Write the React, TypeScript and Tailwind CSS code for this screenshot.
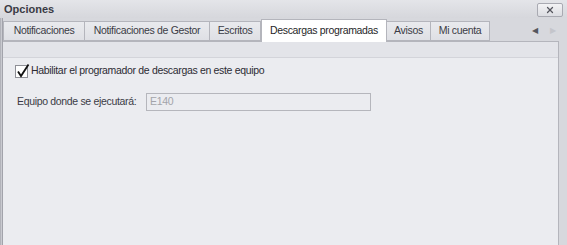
import { X } from 'lucide-react';

const tabs = [
  { label: 'Notificaciones', w: 'w-[82px]' },
  { label: 'Notificaciones de Gestor', w: 'w-[125px]' },
  { label: 'Escritos', w: 'w-[51px]' },
  { label: 'Descargas programadas', w: 'w-[126px]', active: true },
  { label: 'Avisos', w: 'w-[44px]' },
  { label: 'Mi cuenta', w: 'w-[59px]' },
];

export default function App() {
  return (
    <div className="w-[567px] h-[245px] overflow-hidden flex flex-col bg-[#d7d8dd] text-[10.5px] tracking-[-0.33px] text-[#2b2b33] font-['Liberation_Sans',Arial,sans-serif]">
      {/* Title bar */}
      <div className="h-[18px] flex items-center justify-between pl-[4px] pr-[4px] bg-gradient-to-b from-[#e4e5e9] to-[#d6d7dc]">
        <span className="font-bold text-[11px] tracking-normal text-[#3a3b45]">Opciones</span>
        <button className="mt-[1px] w-[26px] h-[14px] flex items-center justify-center rounded-[2px] border border-[#a9aab2] bg-gradient-to-b from-[#f3f3f5] to-[#dcdde2]">
          <X size={10} strokeWidth={3} className="text-[#55565e]" />
        </button>
      </div>

      <div className="flex flex-1">
        {/* left frame */}
        <div className="w-[3px] flex">
          <div className="w-[1px] bg-[#b2b3ba]" />
          <div className="w-[1px] bg-[#c9cad0]" />
          <div className="w-[1px] bg-[#a2a3ab]" />
        </div>

        <div className="flex-1 flex flex-col">
          {/* Tab strip */}
          <div className="h-[23px] flex items-end relative">
            {tabs.map((t) =>
              t.active ? (
                <div
                  key={t.label}
                  className={`${t.w} h-[23px] -mb-[1px] z-10 flex items-center justify-center bg-white border border-b-0 border-[#b4b5bc] text-[#1f1f28]`}
                >
                  {t.label}
                </div>
              ) : (
                <div
                  key={t.label}
                  className={`${t.w} h-[20px] flex items-center justify-center bg-gradient-to-b from-[#e9eaee] to-[#dfe0e5] border border-l-0 first:border-l border-[#b4b5bc] text-[#3a3b45]`}
                >
                  {t.label}
                </div>
              )
            )}
            <div className="flex-1 h-[20px] flex items-center justify-end gap-[13px] pr-[11px]">
              <span className="text-[8px] text-[#55565e]">◀</span>
              <span className="text-[8px] text-[#c4c5cb]">▶</span>
            </div>
          </div>

          {/* Panel */}
          <div className="flex-1 flex flex-col bg-[#ebecf0] border-t border-r border-[#b4b5bc] mr-[8px]">
            <div className="h-[16px] bg-[#e3e4e9] border-b border-[#d3d4da]" />
            <div className="flex flex-col pl-[12px] pt-[6px]">
              <label className="flex items-center gap-[3px] h-[14px]">
                <span className="relative w-[13px] h-[13px] border border-[#8e8f96] bg-white">
                  <svg width="14" height="15" viewBox="0 0 14 15" className="absolute left-[0px] -top-[3px]">
                    <path d="M2 8.5 L5 13 L12.5 1.5" fill="none" stroke="#111" strokeWidth="1.8" />
                  </svg>
                </span>
                <span className="text-[#2b2b33]">Habilitar el programador de descargas en este equipo</span>
              </label>
              <div className="flex items-center mt-[15px] pl-[2px]">
                <span className="w-[129px] whitespace-nowrap text-[#3a3b45]">Equipo donde se ejecutará:</span>
                <div className="w-[225px] h-[18px] border border-[#b5b6bc] bg-[#ebecf0] flex items-center pl-[3px] text-[#a3a4aa]">
                  E140
                </div>
              </div>
            </div>
          </div>
        </div>
      </div>
    </div>
  );
}
